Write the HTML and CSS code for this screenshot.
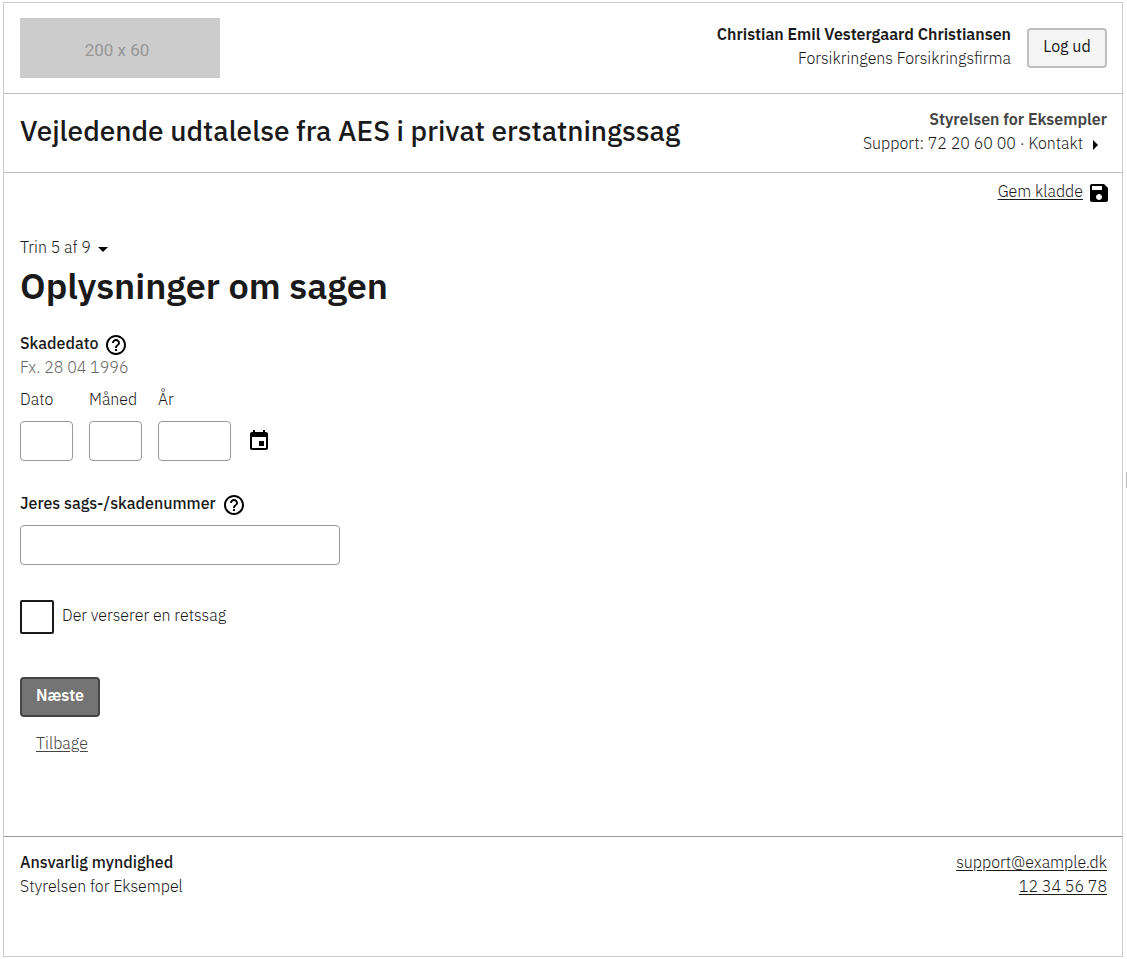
FILE: index.html
```html
<!DOCTYPE html>
<html lang="da">
<head>
<meta charset="utf-8">
<title>Oplysninger om sagen</title>
<link rel="stylesheet" href="styles.css">
</head>
<body>
<div class="page">
  <header>
    <div class="topbar">
      <div class="logo">200 x 60</div>
      <div class="user">
        <div class="lines">
          <strong>Christian Emil Vestergaard Christiansen</strong>
          <span>Forsikringens Forsikringsfirma</span>
        </div>
        <button class="btn" type="button">Log ud</button>
      </div>
    </div>
    <div class="titlebar">
      <h2 class="solution">Vejledende udtalelse fra AES i privat erstatningssag</h2>
      <div class="lines">
        <strong class="agency">Styrelsen for Eksempler</strong>
        <span class="contact">Support: 72 20 60 00 · Kontakt
          <svg class="icon" width="24" height="26" viewBox="0 -2 24 26" aria-hidden="true"><path d="M10 17l5-5-5-5z"/></svg>
        </span>
      </div>
    </div>
  </header>
  <main class="main">
    <div class="save">
      <a href="#">Gem kladde</a>
      <svg class="icon" width="24" height="26" viewBox="0 -2 24 26" aria-hidden="true"><path d="M17 3H5c-1.110 0-2 .9-2 2v14c0 1.100.89 2 2 2h14c1.100 0 2-.9 2-2V7l-4-4zm-5 16c-1.660 0-3-1.340-3-3s1.340-3 3-3 3 1.340 3 3-1.340 3-3 3zm3-10H5V5h10v4z"/></svg>
    </div>
    <button class="steps" type="button">Trin 5 af 9
      <svg class="icon" width="24" height="26" viewBox="0 -2 24 26" aria-hidden="true"><path d="M7 10l5 5 5-5z"/></svg>
    </button>
    <h1 class="heading">Oplysninger om sagen</h1>
    <form class="form">
      <fieldset class="group">
        <legend class="label">Skadedato
          <svg class="icon" width="24" height="26" viewBox="0 -2 24 26" aria-hidden="true"><path d="M11 18h2v-2h-2v2zm1-16C6.480 2 2 6.480 2 12s4.480 10 10 10 10-4.480 10-10S17.520 2 12 2zm0 18c-4.410 0-8-3.590-8-8s3.590-8 8-8 8 3.590 8 8-3.590 8-8 8zm0-14c-2.210 0-4 1.790-4 4h2c0-1.100.9-2 2-2s2 .9 2 2c0 2-3 1.750-3 5h2c0-2.250 3-2.500 3-5 0-2.210-1.790-4-4-4z"/></svg>
        </legend>
        <p class="hint">Fx. 28 04 1996</p>
        <div class="date">
          <div class="part"><label for="day">Dato</label><input id="day" type="text"></div>
          <div class="part"><label for="month">Måned</label><input id="month" type="text"></div>
          <div class="part year"><label for="year">År</label><input id="year" type="text"></div>
          <button class="calendar" type="button" aria-label="Vælg dato">
            <svg width="24" height="24" viewBox="0 0 24 24" aria-hidden="true"><path d="M17 12h-5v5h5v-5zM16 1v2H8V1H6v2H5c-1.110 0-1.990.9-1.990 2L3 19c0 1.100.89 2 2 2h14c1.100 0 2-.9 2-2V5c0-1.100-.9-2-2-2h-1V1h-2zm3 18H5V8h14v11z"/></svg>
          </button>
        </div>
      </fieldset>
      <div class="group case">
        <label class="label" for="case">Jeres sags-/skadenummer
          <svg class="icon" width="24" height="26" viewBox="0 -2 24 26" aria-hidden="true"><path d="M11 18h2v-2h-2v2zm1-16C6.480 2 2 6.480 2 12s4.480 10 10 10 10-4.480 10-10S17.520 2 12 2zm0 18c-4.410 0-8-3.590-8-8s3.590-8 8-8 8 3.590 8 8-3.590 8-8 8zm0-14c-2.210 0-4 1.790-4 4h2c0-1.100.9-2 2-2s2 .9 2 2c0 2-3 1.750-3 5h2c0-2.250 3-2.500 3-5 0-2.210-1.790-4-4-4z"/></svg>
        </label>
        <input id="case" type="text">
      </div>
      <div class="check">
        <input id="lawsuit" type="checkbox"><label for="lawsuit">Der verserer en retssag</label>
      </div>
      <button class="btn primary" type="submit">Næste</button>
      <a class="back" href="#">Tilbage</a>
    </form>
  </main>
  <footer class="footer">
    <div class="lines left">
      <strong class="medium">Ansvarlig myndighed</strong>
      <span>Styrelsen for Eksempel</span>
    </div>
    <div class="lines">
      <a href="#">support@example.dk</a>
      <a href="#">12 34 56 78</a>
    </div>
  </footer>
</div>
<div class="handle"></div>
</body>
</html>
```
FILE: styles.css
```css
* { box-sizing: border-box; }
body {
  margin: 2px 4px 2px 3px;
  background: #fff;
  color: #1a1a1a;
  font: 300 16px/24px "IBM Plex Sans", "Noto Sans", sans-serif;
}
button, input { font: inherit; color: inherit; }
svg { display: block; flex: none; fill: #000; }
.icon { margin-bottom: -2px; }
a { color: inherit; text-underline-offset: 2px; }
.page {
  display: flex;
  flex-direction: column;
  min-height: calc(100vh - 4px);
  border: 1px solid #ccc;
}
.topbar, .titlebar {
  display: flex;
  align-items: center;
  justify-content: space-between;
  padding: 15px 15px 15px 16px;
  border-bottom: 1px solid #bfbfbf;
}
.titlebar { padding-top: 13px; padding-bottom: 17px; }
.logo {
  display: grid;
  place-items: center;
  width: 200px;
  height: 60px;
  padding: 3px 6px 0 0;
  background: #ccc;
  color: #969696;
  font: 400 17px/24px Roboto, sans-serif;
}
.user { display: flex; align-items: center; gap: 16px; }
.user .lines { padding-bottom: 4px; }
.lines { display: flex; flex-direction: column; align-items: flex-end; }
.left { align-items: flex-start; }
strong { font-weight: 600; }
.medium { font-weight: 500; }
.btn {
  width: 80px;
  height: 40px;
  padding: 0 0 4px;
  border: 2px solid #bfbfbf;
  border-radius: 4px;
  background: #f5f5f5;
  font-weight: 400;
}
.solution { margin: 0; font-size: 28px; line-height: 36px; font-weight: 500; }
.agency { color: #454545; }
.contact { display: flex; }
.main { flex: 1; padding: 6px 15px 0 16px; }
.save { display: flex; justify-content: flex-end; gap: 4px; margin-right: -4px; }
.steps {
  display: flex;
  margin: 32px 0 0;
  padding: 0;
  border: 0;
  background: none;
  font-weight: 300;
}
.heading { margin: 3px 0 21px; font-size: 36px; line-height: 48px; font-weight: 600; }
.group { margin: 0; padding: 0; border: 0; }
.label { display: flex; gap: 6px; padding: 0; font-weight: 500; }
.hint { margin: 0; color: #666; }
.date { display: flex; align-items: flex-end; gap: 16px; margin-top: 8px; }
.part { display: flex; flex-direction: column; gap: 10px; width: 53px; }
.year { width: 73px; }
input[type="text"] {
  width: 100%;
  height: 40px;
  padding: 0 8px;
  border: 1px solid #999;
  border-radius: 4px;
  background: #fff;
}
.calendar { height: 40px; padding: 0; border: 0; background: none; }
.case { display: flex; flex-direction: column; gap: 10px; max-width: 320px; margin-top: 30px; }
.check { display: flex; align-items: center; gap: 8px; margin: 35px 0 43px; }
.check label { padding-bottom: 4px; }
.check input {
  appearance: none;
  width: 34px;
  height: 34px;
  margin: 0;
  border: 2px solid #1a1a1a;
  border-radius: 2px;
}
.primary { display: block; border-color: #454545; background: #747474; color: #fff; font-weight: 600; }
.back { display: inline-block; margin: 14px 16px 0; color: #454545; }
.footer {
  display: flex;
  justify-content: space-between;
  padding: 13px 15px 58px 16px;
  border-top: 1px solid #999;
}
.handle { position: absolute; top: 472px; right: 0; width: 1px; height: 16px; background: #bfbfbf; }
```
